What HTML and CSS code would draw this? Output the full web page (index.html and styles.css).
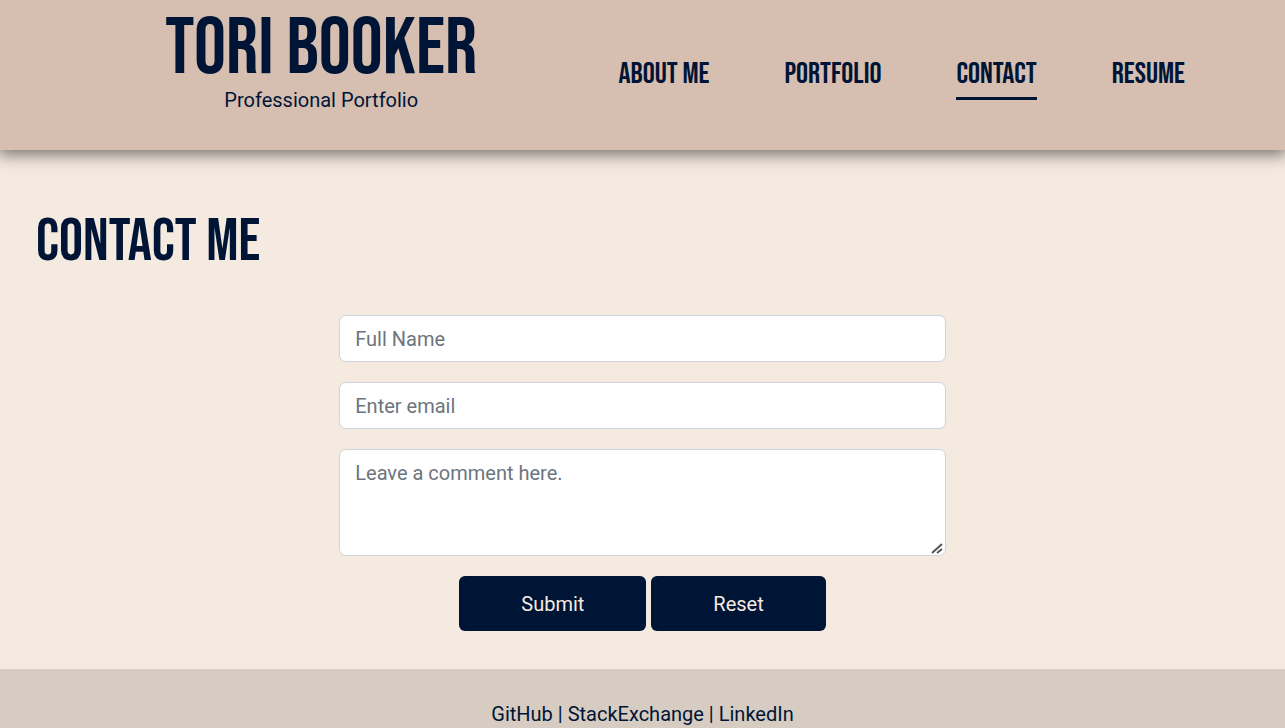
FILE: index.html
```html
<!DOCTYPE html>
<html lang="en">
<head>
  <meta charset="utf-8">
  <meta name="viewport" content="width=device-width, initial-scale=1">
  <title>Tori Booker | Contact</title>
  <link rel="stylesheet" href="styles.css">
</head>
<body class="page">
  <header class="header">
    <div class="brand">
      <h1 class="brand-name">TORI BOOKER</h1>
      <p class="brand-tagline">Professional Portfolio</p>
    </div>
    <nav class="nav">
      <a class="nav-link" href="#about">ABOUT ME</a>
      <a class="nav-link" href="#portfolio">PORTFOLIO</a>
      <a class="nav-link nav-link-active" href="#contact" aria-current="page">CONTACT</a>
      <a class="nav-link" href="#resume">RESUME</a>
    </nav>
  </header>
  <main class="main">
    <h2 class="title">CONTACT ME</h2>
    <form class="form">
      <input class="field" type="text" name="name" placeholder="Full Name" aria-label="Full Name">
      <input class="field" type="email" name="email" placeholder="Enter email" aria-label="Email">
      <textarea class="field field-comment" name="comment" placeholder="Leave a comment here." aria-label="Comment"></textarea>
      <div class="actions">
        <button class="button" type="submit">Submit</button>
        <button class="button" type="reset">Reset</button>
      </div>
    </form>
  </main>
  <footer class="footer">
    <a class="footer-link" href="#github">GitHub</a> | <a class="footer-link" href="#stackexchange">StackExchange</a> | <a class="footer-link" href="#linkedin">LinkedIn</a>
  </footer>
</body>
</html>
```

FILE: styles.css
```css
*,
*::before,
*::after {
  box-sizing: border-box;
}

.page {
  display: flex;
  flex-direction: column;
  min-height: 100vh;
  margin: 0;
  background: #f5eae0;
  color: #001536;
  font-family: Roboto, "Liberation Sans", sans-serif;
  font-size: 20px;
  line-height: 30px;
}

.header {
  display: grid;
  grid-template-columns: minmax(0, 1fr) minmax(0, 1fr);
  padding-bottom: 35px;
  background: #d6beb0;
  box-shadow: 0 3px 15px 2px rgba(0, 0, 0, 0.5);
}

.brand {
  padding-top: 14px;
  text-align: center;
}

.brand-name,
.nav-link,
.title {
  font-family: "Bebas Neue", "Liberation Sans Narrow", "Liberation Sans", sans-serif;
  font-weight: 400;
}

.brand-name {
  margin: 0 0 1px;
  font-size: 80px;
  line-height: 70px;
}

.brand-tagline {
  margin: 0;
}

.nav {
  display: flex;
  justify-content: flex-end;
  align-items: flex-start;
  gap: 75px;
  padding: 52px 100px 0 0;
  white-space: nowrap;
}

.nav-link {
  border-bottom: 3px solid transparent;
  color: inherit;
  font-size: 30px;
  line-height: 45px;
  text-decoration: none;
}

.nav-link-active {
  border-color: #001536;
}

.main {
  padding: 62px 36px 38px;
}

.title {
  margin: 0 0 43px;
  font-size: 60px;
  line-height: 60px;
}

.form {
  display: flex;
  flex-direction: column;
  gap: 20px;
  width: 50%;
  margin: 0 auto;
}

.field {
  display: block;
  width: 100%;
  padding: 8px 15px 7px;
  border: 1px solid #ced4da;
  border-radius: 7px;
  background: #fff;
  color: #212529;
  font: inherit;
  line-height: 30px;
}

.field::placeholder {
  color: #6c757d;
  opacity: 1;
}

.field-comment {
  height: 107px;
  resize: vertical;
}

.field-comment::-webkit-resizer {
  background: url("data:image/svg+xml,%3Csvg xmlns='http://www.w3.org/2000/svg' viewBox='0 0 15 15'%3E%3Cpath d='M2 13L12 4M7 13L12 9' stroke='%23555' stroke-width='2'/%3E%3C/svg%3E") center / 100% 100% no-repeat;
}

.actions {
  display: flex;
  justify-content: center;
  gap: 5px;
}

.button {
  padding: 13px 62px 12px;
  border: 0;
  border-radius: 6px;
  background: #001536;
  color: #f5eae0;
  font: inherit;
  line-height: 30px;
}

.footer {
  flex: 1;
  padding-top: 30px;
  background: #d6ccc1;
  text-align: center;
}

.footer-link {
  color: inherit;
  text-decoration: none;
}
```
